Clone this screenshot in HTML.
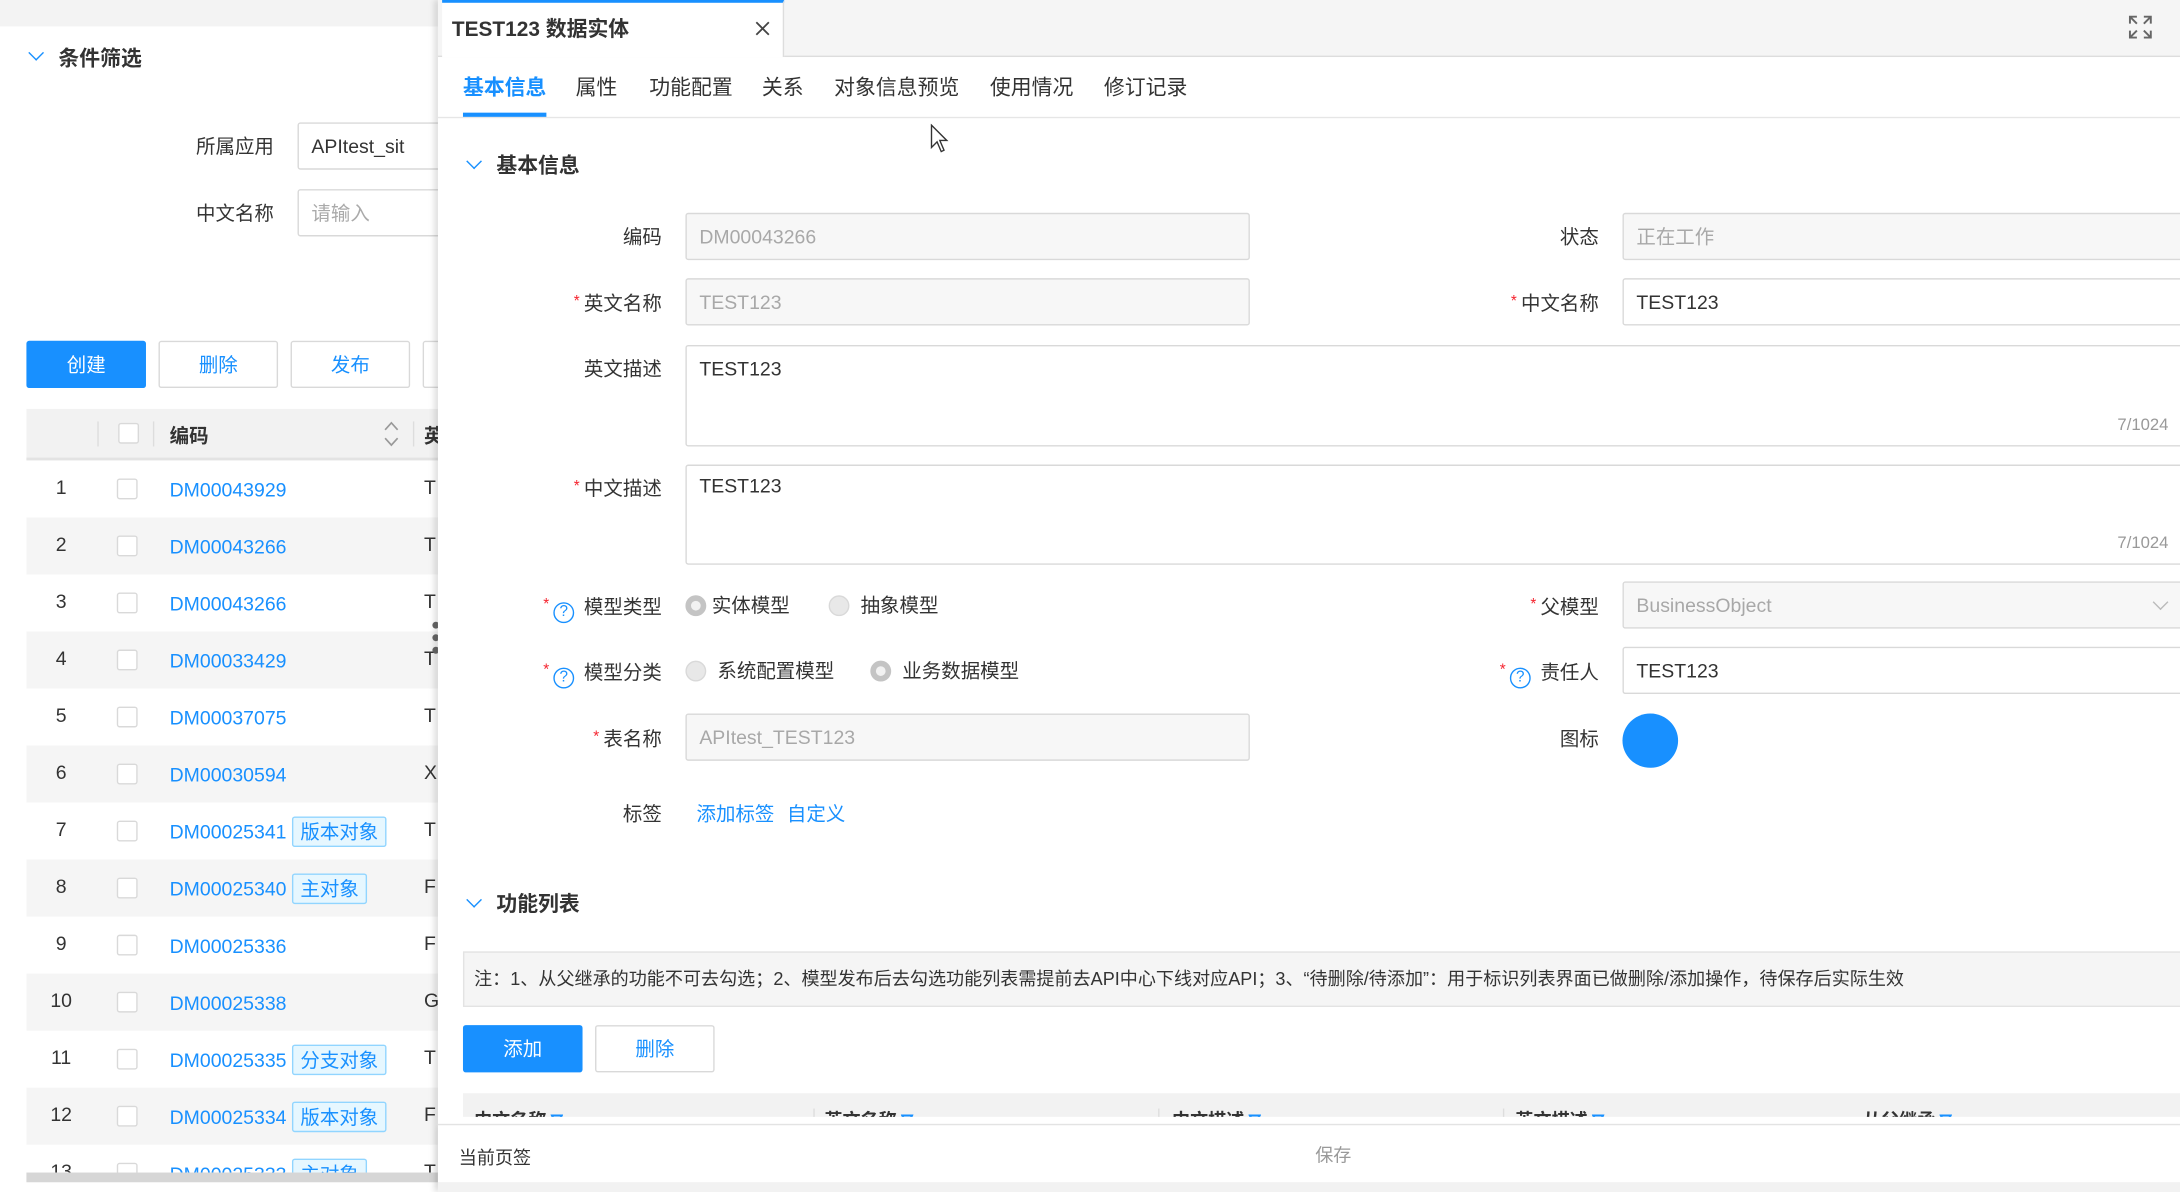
<!DOCTYPE html>
<html><head><meta charset="utf-8"><style>
*{box-sizing:border-box;margin:0;padding:0}
html,body{width:2180px;height:1192px;overflow:hidden;background:#fff}
#s{position:absolute;left:0;top:0;width:1568px;height:857px;transform:scale(1.3903,1.3909);transform-origin:0 0;font-family:"Liberation Sans","Noto Sans CJK SC",sans-serif;font-size:14px;color:#333;overflow:hidden;background:#fff}
.a{position:absolute;white-space:nowrap}
.lbl{position:absolute;text-align:right;width:150px;font-size:14px;color:#333;line-height:20px}
.req{color:#f5222d;font-size:11px;margin-right:3px;vertical-align:3px}
.inp{position:absolute;height:34px;border:1px solid #d9d9d9;border-radius:2px;background:#fff;padding:0 9px;line-height:32px;font-size:14px;color:#333}
.dis{background:#f7f7f7;color:#a8a8a8}
.btn{position:absolute;height:34px;width:86px;border:1px solid #d9d9d9;background:#fff;color:#1890ff;text-align:center;line-height:32px;font-size:14px;border-radius:2px}
.pri{background:#1890ff;border-color:#1890ff;color:#fff}
.row{position:absolute;left:19px;width:296px;height:41px}
.row .n{position:absolute;left:0;width:50px;text-align:center;top:11px}
.row .cb{position:absolute;left:65px;top:13px;width:15px;height:15px;border:1px solid #d9d9d9;background:#fff;border-radius:2px}
.row .c{position:absolute;left:103px;top:9px;height:24px;color:#1890ff;display:flex;align-items:center}
.row .t{position:absolute;left:286px;top:11px}
.tag{display:inline-block;margin-left:4px;padding:0 5px;height:22px;line-height:20px;border:1px solid #91d5ff;background:#e6f7ff;color:#1890ff;border-radius:2px}
.q{display:inline-block;width:15px;height:15px;border:1px solid #1890ff;border-radius:50%;color:#1890ff;font-size:11px;line-height:13px;text-align:center;margin-right:7px;vertical-align:-2px}
.rad{position:absolute;width:15px;height:15px;border-radius:50%}
.rc{border:4px solid #c4c4c4;background:#f2f2f2}
.ru{border:1px solid #d9d9d9;background:#e8e8e8}
.chev{position:absolute;width:8px;height:8px;border-right:1.3px solid #1890ff;border-bottom:1.3px solid #1890ff;transform:rotate(45deg)}
.th{position:absolute;font-weight:bold;font-size:13px}
.fi{display:inline-block;width:9px;height:9px;vertical-align:0;margin-left:3px}
</style></head><body><div id="s">
<!-- left panel -->
<div class="a" style="left:0;top:0;width:318px;height:19px;background:#f3f3f3"></div>
<div class="chev" style="left:22px;top:34px"></div>
<div class="a" style="left:42px;top:31px;font-size:15px;font-weight:bold">条件筛选</div>
<div class="lbl" style="left:47px;top:95px">所属应用</div>
<div class="inp" style="left:214px;top:88px;width:120px">APItest_sit</div>
<div class="lbl" style="left:47px;top:143px">中文名称</div>
<div class="inp" style="left:214px;top:136px;width:120px;color:#aaa">请输入</div>
<div class="btn pri" style="left:19px;top:245px">创建</div>
<div class="btn" style="left:114px;top:245px">删除</div>
<div class="btn" style="left:209px;top:245px">发布</div>
<div class="btn" style="left:304px;top:245px"></div>
<div class="a" style="left:19px;top:294px;width:300px;height:37px;background:#f2f2f2;border-bottom:2px solid #e3e3e3"></div>
<div class="a" style="left:70px;top:303px;width:1px;height:18px;background:#ddd"></div>
<div class="a" style="left:110px;top:303px;width:1px;height:18px;background:#ddd"></div>
<div class="a" style="left:297px;top:303px;width:1px;height:18px;background:#ddd"></div>
<div class="a" style="left:85px;top:304px;width:15px;height:15px;border:1px solid #d9d9d9;background:#fff;border-radius:2px"></div>
<div class="a" style="left:122px;top:303px;font-weight:bold">编码</div>
<svg class="a" style="left:276px;top:302px" width="11" height="20" viewBox="0 0 11 20" fill="none" stroke="#999" stroke-width="1.2"><path d="M1 7l4.5-5 4.5 5M1 13l4.5 5 4.5-5"/></svg>
<div class="a" style="left:305px;top:303px;font-weight:bold">英</div>
<div class="row" style="top:331px"><div class="n">1</div><div class="cb"></div><div class="c">DM00043929</div><div class="t">T</div></div>
<div class="row" style="top:372px;background:#f5f5f5"><div class="n">2</div><div class="cb"></div><div class="c">DM00043266</div><div class="t">T</div></div>
<div class="row" style="top:413px"><div class="n">3</div><div class="cb"></div><div class="c">DM00043266</div><div class="t">T</div></div>
<div class="row" style="top:454px;background:#f5f5f5"><div class="n">4</div><div class="cb"></div><div class="c">DM00033429</div><div class="t">T</div></div>
<div class="row" style="top:495px"><div class="n">5</div><div class="cb"></div><div class="c">DM00037075</div><div class="t">T</div></div>
<div class="row" style="top:536px;background:#f5f5f5"><div class="n">6</div><div class="cb"></div><div class="c">DM00030594</div><div class="t">X</div></div>
<div class="row" style="top:577px"><div class="n">7</div><div class="cb"></div><div class="c">DM00025341<span class="tag">版本对象</span></div><div class="t">T</div></div>
<div class="row" style="top:618px;background:#f5f5f5"><div class="n">8</div><div class="cb"></div><div class="c">DM00025340<span class="tag">主对象</span></div><div class="t">F</div></div>
<div class="row" style="top:659px"><div class="n">9</div><div class="cb"></div><div class="c">DM00025336</div><div class="t">F</div></div>
<div class="row" style="top:700px;background:#f5f5f5"><div class="n">10</div><div class="cb"></div><div class="c">DM00025338</div><div class="t">G</div></div>
<div class="row" style="top:741px"><div class="n">11</div><div class="cb"></div><div class="c">DM00025335<span class="tag">分支对象</span></div><div class="t">T</div></div>
<div class="row" style="top:782px;background:#f5f5f5"><div class="n">12</div><div class="cb"></div><div class="c">DM00025334<span class="tag">版本对象</span></div><div class="t">F</div></div>
<div class="row" style="top:823px;height:20px;overflow:hidden"><div class="n">13</div><div class="cb"></div><div class="c">DM00025333<span class="tag">主对象</span></div><div class="t">T</div></div>
<div class="a" style="left:19px;top:843px;width:296px;height:7px;background:#d6d6d6"></div>
<div class="a" style="left:311px;top:447px;width:5px;height:5px;border-radius:50%;background:#666;box-shadow:0 9px 0 #666,0 18px 0 #666"></div>
<!-- drawer -->
<div class="a" style="left:315px;top:0;width:1253px;height:857px;background:#fff;box-shadow:-3px 0 4px rgba(0,0,0,.12)"></div>
<div class="a" style="left:315px;top:0;width:1253px;height:41px;background:#f5f5f5;border-bottom:1px solid #ddd"></div>
<div class="a" style="left:318px;top:0;width:246px;height:41px;background:#fff;border-top:2px solid #1890ff;border-right:1px solid #ddd"></div>
<div class="a" style="left:325px;top:10px;font-size:15px;font-weight:bold">TEST123 数据实体</div>
<svg class="a" style="left:543px;top:15px" width="11" height="11" viewBox="0 0 11 11" stroke="#444" stroke-width="1.3"><path d="M1 1l9 9M10 1l-9 9"/></svg>
<svg class="a" style="left:1531px;top:11px" width="17" height="17" viewBox="0 0 17 17" fill="none" stroke="#666" stroke-width="1.4"><path d="M1 6V1h5M1 1l5 5M16 6V1h-5M16 1l-5 5M1 11v5h5M1 16l5-5M16 11v5h-5M16 16l-5-5"/></svg>
<div class="a" style="left:315px;top:84px;width:1253px;height:1px;background:#e6e6e6"></div>
<div class="a" style="left:333px;top:52px;font-size:15px;font-weight:bold;color:#1890ff">基本信息</div>
<div class="a" style="left:333px;top:81px;width:60px;height:3px;background:#1890ff"></div>
<div class="a" style="left:414px;top:52px;font-size:15px">属性</div>
<div class="a" style="left:467px;top:52px;font-size:15px">功能配置</div>
<div class="a" style="left:548px;top:52px;font-size:15px">关系</div>
<div class="a" style="left:600px;top:52px;font-size:15px">对象信息预览</div>
<div class="a" style="left:712px;top:52px;font-size:15px">使用情况</div>
<div class="a" style="left:794px;top:52px;font-size:15px">修订记录</div>
<svg class="a" style="left:669px;top:89px" width="14" height="22" viewBox="0 0 14 22"><path d="M1 1v16l4-4 3 7 2-1-3-7h5z" fill="#fff" stroke="#333" stroke-width="1"/></svg>
<div class="chev" style="left:337px;top:112px"></div>
<div class="a" style="left:357px;top:108px;font-size:15px;font-weight:bold">基本信息</div>
<div class="lbl" style="left:326px;top:160px">编码</div>
<div class="inp dis" style="left:493px;top:153px;width:406px">DM00043266</div>
<div class="lbl" style="left:1000px;top:160px">状态</div>
<div class="inp dis" style="left:1167px;top:153px;width:420px">正在工作</div>
<div class="lbl" style="left:326px;top:207px"><span class="req">*</span>英文名称</div>
<div class="inp dis" style="left:493px;top:200px;width:406px">TEST123</div>
<div class="lbl" style="left:1000px;top:207px"><span class="req">*</span>中文名称</div>
<div class="inp" style="left:1167px;top:200px;width:420px">TEST123</div>
<div class="lbl" style="left:326px;top:255px">英文描述</div>
<div class="inp" style="left:493px;top:248px;width:1100px;height:73px;line-height:20px;padding-top:6px">TEST123</div>
<div class="a" style="left:1523px;top:298px;font-size:12px;color:#999">7/1024</div>
<div class="lbl" style="left:326px;top:340px"><span class="req">*</span>中文描述</div>
<div class="inp" style="left:493px;top:334px;width:1100px;height:72px;line-height:20px;padding-top:4px">TEST123</div>
<div class="a" style="left:1523px;top:383px;font-size:12px;color:#999">7/1024</div>
<div class="lbl" style="left:326px;top:425px"><span class="req">*</span><span class="q">?</span>模型类型</div>
<div class="rad rc" style="left:493px;top:428px"></div><div class="a" style="left:512px;top:425px">实体模型</div>
<div class="rad ru" style="left:596px;top:428px"></div><div class="a" style="left:619px;top:425px">抽象模型</div>
<div class="lbl" style="left:1000px;top:425px"><span class="req">*</span>父模型</div>
<div class="inp dis" style="left:1167px;top:418px;width:420px">BusinessObject</div>
<div class="a" style="left:1550px;top:429px;width:8px;height:8px;border-right:1px solid #bbb;border-bottom:1px solid #bbb;transform:rotate(45deg)"></div>
<div class="lbl" style="left:326px;top:472px"><span class="req">*</span><span class="q">?</span>模型分类</div>
<div class="rad ru" style="left:493px;top:475px"></div><div class="a" style="left:516px;top:472px">系统配置模型</div>
<div class="rad rc" style="left:626px;top:475px"></div><div class="a" style="left:649px;top:472px">业务数据模型</div>
<div class="lbl" style="left:1000px;top:472px"><span class="req">*</span><span class="q">?</span>责任人</div>
<div class="inp" style="left:1167px;top:465px;width:420px">TEST123</div>
<div class="lbl" style="left:326px;top:520px"><span class="req">*</span>表名称</div>
<div class="inp dis" style="left:493px;top:513px;width:406px">APItest_TEST123</div>
<div class="lbl" style="left:1000px;top:521px">图标</div>
<div class="a" style="left:1167px;top:513px;width:40px;height:39px;border-radius:50%;background:#1890ff"></div>
<div class="lbl" style="left:326px;top:575px">标签</div>
<div class="a" style="left:501px;top:575px;color:#1890ff">添加标签</div>
<div class="a" style="left:566px;top:575px;color:#1890ff">自定义</div>
<div class="chev" style="left:337px;top:643px"></div>
<div class="a" style="left:357px;top:639px;font-size:15px;font-weight:bold">功能列表</div>
<div class="a" style="left:333px;top:684px;width:1250px;height:40px;background:#f5f5f5;border:1px solid #e3e3e3;padding:0 7px;line-height:38px;font-size:13px">注：1、从父继承的功能不可去勾选；2、模型发布后去勾选功能列表需提前去API中心下线对应API；3、“待删除/待添加”：用于标识列表界面已做删除/添加操作，待保存后实际生效</div>
<div class="btn pri" style="left:333px;top:737px">添加</div>
<div class="btn" style="left:428px;top:737px">删除</div>
<div class="a" style="left:333px;top:786px;width:1240px;height:22px;background:#f2f2f2;overflow:hidden">
<div class="th" style="left:8px;top:9px">中文名称<svg class="fi" viewBox="0 0 9 9"><path d="M1 1h7L4.5 8z" fill="none" stroke="#1890ff" stroke-width="1.5"/></svg></div>
<div class="a" style="left:252px;top:11px;width:1px;height:12px;background:#ddd"></div>
<div class="th" style="left:260px;top:9px">英文名称<svg class="fi" viewBox="0 0 9 9"><path d="M1 1h7L4.5 8z" fill="none" stroke="#1890ff" stroke-width="1.5"/></svg></div>
<div class="a" style="left:500px;top:11px;width:1px;height:12px;background:#ddd"></div>
<div class="th" style="left:510px;top:9px">中文描述<svg class="fi" viewBox="0 0 9 9"><path d="M1 1h7L4.5 8z" fill="none" stroke="#1890ff" stroke-width="1.5"/></svg></div>
<div class="a" style="left:748px;top:11px;width:1px;height:12px;background:#ddd"></div>
<div class="th" style="left:757px;top:9px">英文描述<svg class="fi" viewBox="0 0 9 9"><path d="M1 1h7L4.5 8z" fill="none" stroke="#1890ff" stroke-width="1.5"/></svg></div>
<div class="th" style="left:1007px;top:9px">从父继承<svg class="fi" viewBox="0 0 9 9"><path d="M1 1h7L4.5 8z" fill="none" stroke="#1890ff" stroke-width="1.5"/></svg></div>
</div>
<div class="a" style="left:315px;top:803px;width:1253px;height:6px;background:#fff"></div>
<div class="a" style="left:315px;top:808px;width:1253px;height:42px;background:#fff;border-top:1px solid #e3e3e3;box-shadow:0 3px 4px rgba(0,0,0,.08)"></div>
<div class="a" style="left:330px;top:822px;font-size:13px">当前页签</div>
<div class="a" style="left:946px;top:820px;font-size:13px;color:#999">保存</div>
<div class="a" style="left:315px;top:850px;width:1253px;height:7px;background:#f2f2f2"></div>
</div></body></html>
